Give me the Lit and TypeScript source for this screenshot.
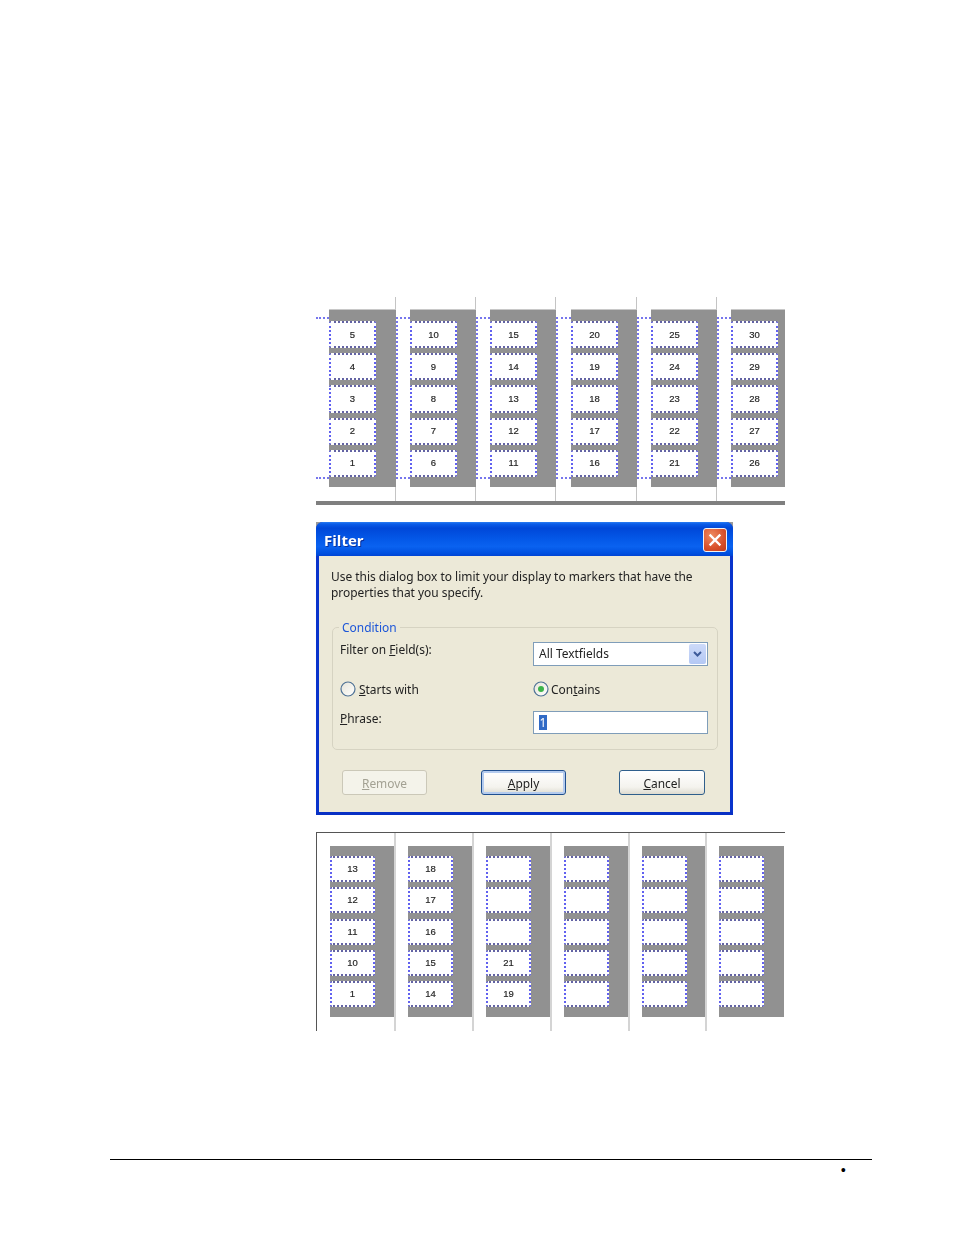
import { LitElement, html, svg, css } from "lit";
import { customElement } from "lit/decorators.js";

const topCols = [[5,4,3,2,1],[10,9,8,7,6],[15,14,13,12,11],[20,19,18,17,16],[25,24,23,22,21],[30,29,28,27,26]];
const bottomCols: (number | string)[][] = [[13,12,11,10,1],[18,17,16,15,14],["","","",21,19],["","","","",""],["","","","",""],["","","","",""]];

@customElement("app-root")
export class AppRoot extends LitElement {
  static styles = css`
    :host { display: block; width: 954px; height: 1235px; background: #fff; overflow: hidden; font-family: "Noto Sans", sans-serif; }
    .content { padding: 297px 0 0 316px; display: flex; flex-direction: column; align-items: flex-start; }

    .fig { display: grid; width: 469px; box-sizing: border-box; overflow: hidden; filter: blur(0.35px); }
    .num { font: 400 9.5px "Liberation Sans", sans-serif; color: #222; -webkit-text-stroke: 0.2px #333; }
    .slot { display: flex; box-sizing: border-box; border-right: 1px solid #c4c4c4; }
    .col { background: #919191; display: flex; flex-direction: column; box-sizing: border-box; }
    .card { background: #fff; box-sizing: border-box; padding-bottom: 1px; border: 2px dotted rgba(45,45,235,.75); border-top-color: rgba(40,40,130,.72); border-bottom-color: rgba(40,40,130,.72); display: flex; align-items: center; justify-content: center; border-radius: 2px; }

    .fig-a { grid-template-columns: 80px 80px 80px 81px 80px 68px; height: 208px; border-bottom: 4px solid #7f7f7f; }
    .fig-a .slot { height: 204px; }
    .fig-a .slot:last-child { border-right: 0; }
    .gutter { width: 14px; flex: none; height: 162px; margin-top: 20px; box-sizing: border-box; border: 2px dotted rgba(60,60,230,.7); border-width: 2px 0 2px 2px; }
    .fig-a .slot:first-child .gutter { width: 13px; border-left: 0; }
    .fig-a .slot:nth-child(4) .gutter { width: 15px; }
    .fig-a .col { flex: 1; height: 177px; margin: 13px -1px 0 0; padding-top: 11px; gap: 5px; box-shadow: 0 -1px 0 #c8c8c8; }
    .fig-a .card { width: 47px; height: 27.2px; }

    .fig-b { grid-template-columns: 79px 78px 78px 78px 77px 78px; height: 199px; border-top: 1px solid #555; border-left: 1px solid #555; }
    .fig-b .slot { height: 198px; border-right: 2px solid #d4d4d4; padding: 13px 0 0 12px; }
    .fig-b .slot:first-child { padding-left: 13px; }
    .fig-b .slot:last-child { border-right: 0; }
    .fig-b .col { flex: 1; height: 171px; padding-top: 10px; gap: 5.25px; }
    .fig-b .card { width: 45px; height: 26px; }
    .fig-b .slot:last-child .col { margin-right: 1px; }

    .dialog { margin-top: 17px; width: 417px; height: 293px; background: #9a9a9a; filter: blur(0.25px); }
    .frame { height: 100%; box-sizing: border-box; background: #0934cc; border-radius: 7px 7px 0 0; overflow: hidden; display: flex; flex-direction: column; border-bottom: 3px solid #0830c4; }
    .title { height: 34px; flex: none; box-sizing: border-box; padding: 2px 6px 0 8px; display: flex; align-items: center; justify-content: space-between;
      background: linear-gradient(#2a7df2 0, #0a5ce8 6%, #0047d8 18%, #0458e8 50%, #0a62f0 72%, #0050e0 92%, #0044d4 100%); }
    .title span { color: #fff; font: 700 15px "Open Sans", sans-serif; text-shadow: 1px 1px 0 #0a2f9c; }
    .close { width: 24px; height: 24px; box-sizing: border-box; border: 1px solid #f3f3f3; border-radius: 3px; background: radial-gradient(circle at 35% 30%, #ee8a60, #d9512b 60%, #c13a1a); display: flex; align-items: center; justify-content: center; }
    .body { flex: 1; margin: 0 3px; background: #ece9d8; padding: 13px 12px 0 12px; box-sizing: border-box; color: #222; font-size: 11.94px; }
    .intro { margin: 0; line-height: 15.5px; height: 31px; white-space: nowrap; }
    .group { position: relative; margin: 27px 0 0 1px; width: 386px; height: 123px; box-sizing: border-box; border: 1px solid #d6d3c2; border-radius: 5px; padding: 14px 9px 0 7px; display: grid; grid-template-columns: 193px 175px; grid-template-rows: 24px 15px 23px; row-gap: 15px; align-items: center; align-content: start; }
    .legend { position: absolute; top: -8px; left: 6px; padding: 0 3px; background: #ece9d8; color: #1c55d8; line-height: 15px; }
    .label { align-self: start; line-height: 14px; white-space: nowrap; }
    u { text-underline-offset: 1px; }
    .select { height: 24px; box-sizing: border-box; border: 1px solid #7f9db9; background: #fff; display: flex; align-items: center; justify-content: space-between; padding: 0 1px 0 5px; }
    .select > span { margin-top: -2px; }
    .arrow { width: 17px; height: 20px; background: linear-gradient(#cddaf9, #b4c8f4); border-radius: 2px; display: flex; align-items: center; justify-content: center; }
    .radio { display: flex; align-items: center; gap: 3px; white-space: nowrap; }
    .radio.second { gap: 2px; }
    .input { height: 23px; box-sizing: border-box; border: 1px solid #7f9db9; background: #fff; padding: 3px 0 0 5px; display: flex; align-items: flex-start; }
    .sel { background: #316ac5; color: #fff; height: 15px; line-height: 15px; width: 8px; text-align: center; }
    .buttons { display: flex; margin: 20px 0 0 11px; }
    .btn { height: 25px; box-sizing: border-box; border: 1px solid #2f5f8c; border-radius: 3px; padding-top: 2px; background: linear-gradient(#fff, #f4f3ee 70%, #dedbd0); display: flex; align-items: center; justify-content: center; width: 86px; margin-left: 53px; line-height: 1; }
    .btn.off { width: 85px; margin-left: 0; border-color: #cbc8b8; background: #f4f3ea; color: #a3a193; }
    .btn.def { width: 85px; margin-left: 54px; box-shadow: inset 0 0 0 2px #b4cbee; border-color: #1f4f90; }

    .foot { margin: 128px 82px 0 110px; border-top: 1px solid #000; display: flex; justify-content: flex-end; padding-right: 26px; }
    .foot span { font: 16px/22px "Liberation Serif", serif; color: #000; }
  `;

  private renderCol(cards: (number | string)[]) {
    return html`<div class="col">${cards.map((c) => html`<div class="card"><span class="num">${c}</span></div>`)}</div>`;
  }

  private radio(on: boolean) {
    return html`<svg width="16" height="16" viewBox="0 0 16 16">
      <defs><linearGradient id="rg" x1="0" y1="0" x2="1" y2="1"><stop offset="0" stop-color="#e6e4d8"/><stop offset="1" stop-color="#ffffff"/></linearGradient></defs>
      <circle cx="8" cy="8" r="7" fill="url(#rg)" stroke="#4f7296" stroke-width="1.2"/>
      ${on ? svg`<circle cx="8" cy="8" r="3" fill="#3cb44a"/>` : ""}
    </svg>`;
  }

  render() {
    return html`
      <div class="content">
        <div class="fig fig-a">
          ${topCols.map((c) => html`<div class="slot"><div class="gutter"></div>${this.renderCol(c)}</div>`)}
        </div>

        <div class="dialog">
          <div class="frame">
            <div class="title">
              <span>Filter</span>
              <div class="close">
                <svg width="14" height="14" viewBox="0 0 14 14"><path d="M2.5 2.5 L11.5 11.5 M11.5 2.5 L2.5 11.5" stroke="#fff" stroke-width="2.4" stroke-linecap="square"/></svg>
              </div>
            </div>
            <div class="body">
              <p class="intro">Use this dialog box to limit your display to markers that have the<br />properties that you specify.</p>
              <div class="group">
                <div class="legend">Condition</div>
                <div class="label">Filter on <u>F</u>ield(s):</div>
                <div class="select">
                  <span>All Textfields</span>
                  <div class="arrow">
                    <svg width="11" height="9" viewBox="0 0 11 9"><path d="M2 2 L5.5 5.5 L9 2" fill="none" stroke="#3d5a9a" stroke-width="2"/></svg>
                  </div>
                </div>
                <div class="radio">${this.radio(false)}<span><u>S</u>tarts with</span></div>
                <div class="radio second">${this.radio(true)}<span>Con<u>t</u>ains</span></div>
                <div class="label"><u>P</u>hrase:</div>
                <div class="input"><span class="sel">1</span></div>
              </div>
              <div class="buttons">
                <div class="btn off"><span><u>R</u>emove</span></div>
                <div class="btn def"><span><u>A</u>pply</span></div>
                <div class="btn"><span><u>C</u>ancel</span></div>
              </div>
            </div>
          </div>
        </div>

        <div class="fig fig-b" style="margin-top:17px">
          ${bottomCols.map((c) => html`<div class="slot">${this.renderCol(c)}</div>`)}
        </div>
      </div>
      <div class="foot"><span>•</span></div>
    `;
  }
}
